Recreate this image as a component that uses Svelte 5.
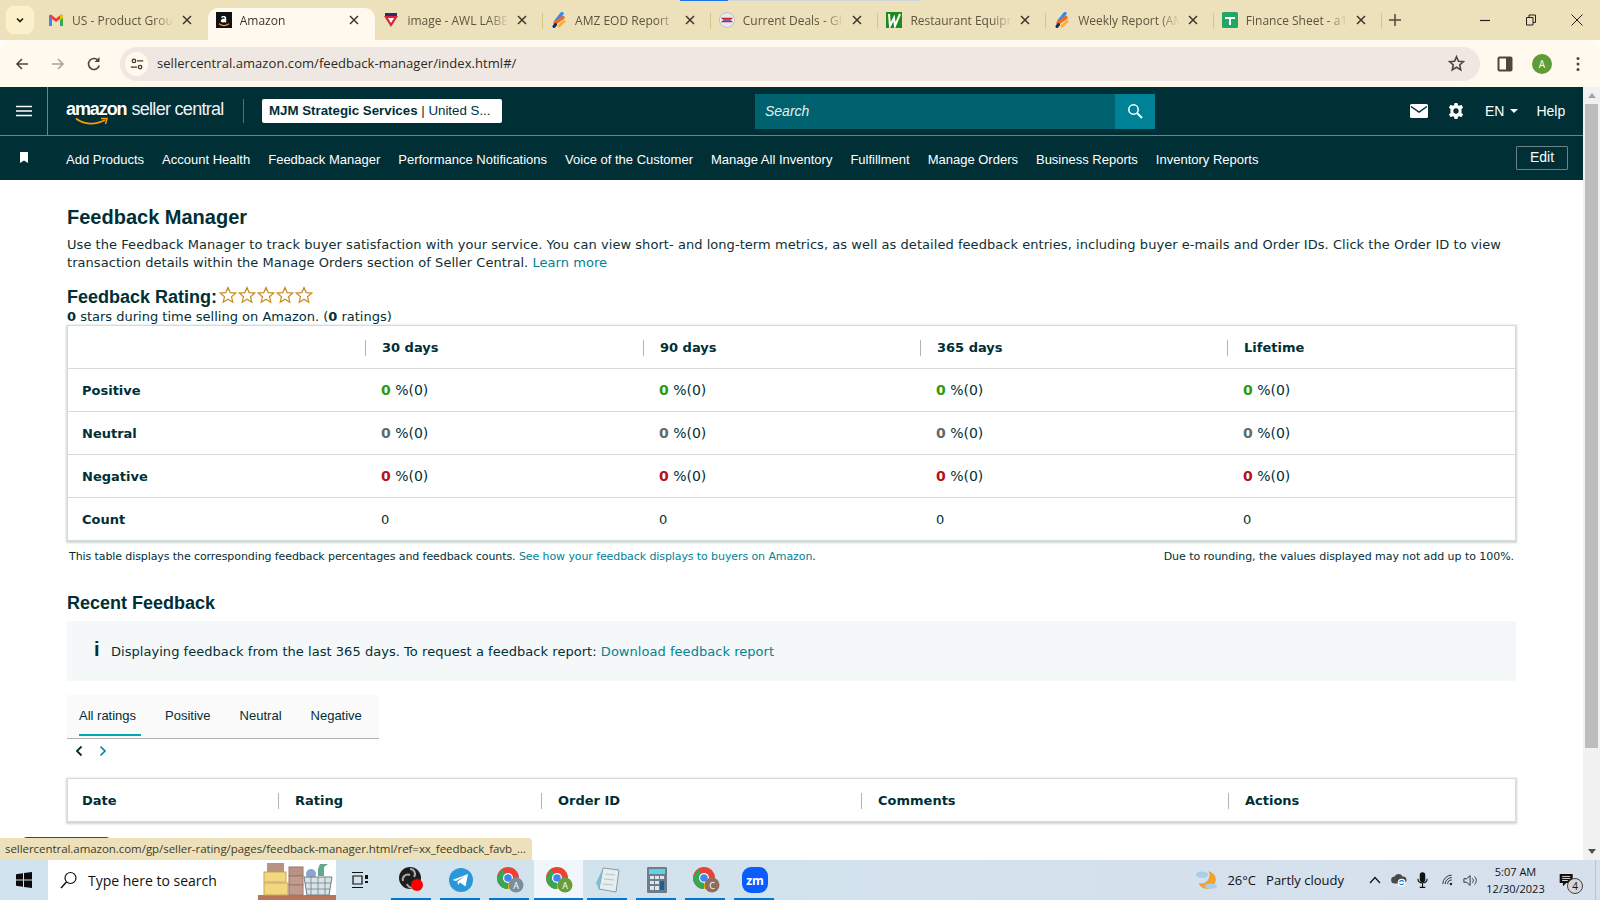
<script>
  const tabs = [
    { title: 'US - Product Group', icon: 'gmail' },
    { title: 'Amazon', icon: 'amazon', active: true },
    { title: 'image - AWL LABEL', icon: 'awl' },
    { title: 'AMZ EOD Report', icon: 'monday' },
    { title: 'Current Deals - Global', icon: 'gpd' },
    { title: 'Restaurant Equipment', icon: 'rest' },
    { title: 'Weekly Report (AMZ)', icon: 'monday' },
    { title: 'Finance Sheet - a1b2', icon: 'sheet' }
  ];

  const navLinks = [
    'Add Products', 'Account Health', 'Feedback Manager', 'Performance Notifications',
    'Voice of the Customer', 'Manage All Inventory', 'Fulfillment', 'Manage Orders',
    'Business Reports', 'Inventory Reports'
  ];

  const ratingRows = [
    { label: 'Positive', tone: 'pos' },
    { label: 'Neutral', tone: 'neu' },
    { label: 'Negative', tone: 'neg' }
  ];
  const periods = ['30 days', '90 days', '365 days', 'Lifetime'];
  const ratingTabs = ['All ratings', 'Positive', 'Neutral', 'Negative'];
  const feedbackCols = ['Date', 'Rating', 'Order ID', 'Comments', 'Actions'];
  const taskIcons = ['obs', 'telegram', 'chromeA', 'chromeActive', 'notepad', 'calc', 'chromeC', 'zoom'];
</script>

<div class="screen">
  <div class="tabstrip">
    <div class="tabs-menu">
      <svg viewBox="0 0 12 12" width="12" height="12"><path d="M3 4.500 6 7.500 9 4.500" fill="none" stroke="#26221a" stroke-width="1.700"/></svg>
    </div>
    {#each tabs as tab}
      <div class="tab" class:active={tab.active}>
        <span class="favicon">
          {#if tab.icon === 'gmail'}
            <svg viewBox="0 0 16 16"><path d="M1 14V3.500L3 2.500 8 6.500 13 2.500 15 3.500V14H12V7L8 10 4 7V14Z" fill="#ea4335"/><path d="M1 14V3.500L4 6V14Z" fill="#4285f4"/><path d="M15 14V3.500L12 6V14Z" fill="#34a853"/><path d="M12 3.500 13 2.500 15 3.500V6L12 8Z" fill="#fbbc04"/></svg>
          {:else if tab.icon === 'amazon'}
            <svg viewBox="0 0 16 16"><rect width="16" height="16" fill="#111"/><path d="M5 5.200C5.500 3.800 10.200 3.200 10.200 6V10.500H8.600V9.700C7.500 10.900 4.800 10.800 4.800 8.800 4.800 7 7 6.600 8.600 6.700 8.700 5 6.800 5 6.200 6Z" fill="#fff"/><path d="M3 11.800C6 14 10 14 13 11.800" fill="none" stroke="#f90" stroke-width="1.200"/></svg>
          {:else if tab.icon === 'awl'}
            <svg viewBox="0 0 16 16"><path d="M1 4H15L8 15Z" fill="#d8263c"/><path d="M5 6H11L8 11Z" fill="#fff"/><rect x="2" y="1" width="12" height="3" fill="#2d2a6e"/></svg>
          {:else if tab.icon === 'monday'}
            <svg viewBox="0 0 16 16"><path d="M5 9 11 1.500" stroke="#2f8cf0" stroke-width="3.500" stroke-linecap="round"/><path d="M4 11 12 5.500" stroke="#f26a21" stroke-width="3.500" stroke-linecap="round"/><path d="M8 14 13 9.500" stroke="#fbb034" stroke-width="3" stroke-linecap="round"/><path d="M3 14.500 4.500 12.500" stroke="#1c2a5a" stroke-width="3" stroke-linecap="round"/></svg>
          {:else if tab.icon === 'gpd'}
            <svg viewBox="0 0 16 16"><circle cx="8" cy="8" r="7.500" fill="#e8e8f0" stroke="#9aa" stroke-width=".6"/><rect x="1" y="6" width="14" height="4" fill="#fff"/><path d="M2.500 6.500H13.500M2.500 9.500H13.500" stroke="#d0202a" stroke-width="1.400"/><path d="M4 8H12" stroke="#2a3a8a" stroke-width="1.300"/></svg>
          {:else if tab.icon === 'rest'}
            <svg viewBox="0 0 16 16"><rect width="16" height="16" fill="#1f8a1f"/><path d="M3 2 4 14 8 6 9 14 14 2" fill="none" stroke="#fff" stroke-width="2"/></svg>
          {:else if tab.icon === 'sheet'}
            <svg viewBox="0 0 16 16"><rect width="16" height="16" rx="1.500" fill="#23a566"/><path d="M3 5H13V7H9V13H7V7H3Z" fill="#fff"/></svg>
          {/if}
        </span>
        <span class="tab-title">{tab.title}</span>
        <svg class="tab-x" viewBox="0 0 10 10" width="10" height="10"><path d="M1 1 9 9M9 1 1 9" stroke="#3b372c" stroke-width="1.500"/></svg>
      </div>
    {/each}
    <svg class="new-tab" viewBox="0 0 12 12" width="12" height="12"><path d="M6 0V12M0 6H12" stroke="#4d4836" stroke-width="1.500"/></svg>
    <div class="window-btns">
      <svg viewBox="0 0 12 12" width="12" height="12"><path d="M1 6.500H11" stroke="#222" stroke-width="1.200"/></svg>
      <svg viewBox="0 0 12 12" width="12" height="12"><path d="M1.500 3.500H8V11H1.500ZM4 3.500V1H10.500V8.500H8" fill="none" stroke="#222"/></svg>
      <svg viewBox="0 0 12 12" width="12" height="12"><path d="M.5.500 11.500 11.500M11.500.500.5 11.500" stroke="#222"/></svg>
    </div>
    <div class="load-bar"></div>
  </div>

  <div class="toolbar">
    <svg class="tool first" viewBox="0 0 16 16" width="16" height="16"><path d="M14 8H3M8 3 3 8 8 13" fill="none" stroke="#4d4836" stroke-width="1.600"/></svg>
    <svg class="tool" viewBox="0 0 16 16" width="16" height="16"><path d="M2 8H13M8 3 13 8 8 13" fill="none" stroke="#a9a595" stroke-width="1.600"/></svg>
    <svg class="tool" viewBox="0 0 16 16" width="16" height="16"><path d="M13.300 9.500A5.500 5.500 0 1 1 12 4.200" fill="none" stroke="#4d4836" stroke-width="1.600"/><path d="M13.500 1V6H8.500Z" fill="#4d4836"/></svg>
    <div class="urlbar">
      <span class="site-btn">
        <svg viewBox="0 0 16 16" width="14" height="14"><circle cx="4.500" cy="4.500" r="2" fill="none" stroke="#3c3828" stroke-width="1.400"/><path d="M8 4.500H15M1 11.500H8" stroke="#3c3828" stroke-width="1.400"/><circle cx="11.500" cy="11.500" r="2" fill="none" stroke="#3c3828" stroke-width="1.400"/></svg>
      </span>
      <span class="url">sellercentral.amazon.com/feedback-manager/index.html#/</span>
      <svg class="url-star" viewBox="0 0 18 18" width="17" height="17"><path d="M9 1.800 11.100 6.600 16.300 7.100 12.400 10.600 13.500 15.700 9 13 4.500 15.700 5.600 10.600 1.700 7.100 6.900 6.600Z" fill="none" stroke="#4d4836" stroke-width="1.700"/></svg>
    </div>
    <svg class="side-panel" viewBox="0 0 16 16" width="16" height="16"><rect x="1.500" y="1.500" width="13" height="13" rx="1" fill="#fff9ee" stroke="#4d4836" stroke-width="2"/><rect x="9" y="1" width="6" height="14" fill="#4d4836"/></svg>
    <span class="avatar">A</span>
    <svg class="kebab" viewBox="0 0 4 16" width="4" height="16"><circle cx="2" cy="2.500" r="1.500" fill="#4d4836"/><circle cx="2" cy="8" r="1.500" fill="#4d4836"/><circle cx="2" cy="13.500" r="1.500" fill="#4d4836"/></svg>
  </div>

  <div class="viewport">
    <div class="page">
      <header class="masthead">
        <div class="top-row">
          <button class="burger" aria-label="Menu">
            <svg viewBox="0 0 16 12" width="16" height="12"><path d="M0 1.500H16M0 6H16M0 10.500H16" stroke="#fff" stroke-width="1.700"/></svg>
          </button>
          <div class="logo">
            <span class="logo-amazon">amazon</span><span class="logo-seller">seller central</span>
            <svg class="smile" viewBox="0 0 34 10" width="34" height="10"><path d="M1 1.500C9 8 21 8 30 3" fill="none" stroke="#f90" stroke-width="1.800"/><path d="M26 1.500 32 1.500 30.500 7" fill="none" stroke="#f90" stroke-width="1.500"/></svg>
          </div>
          <span class="logo-div"></span>
          <div class="account"><b>MJM Strategic Services</b> | United S...</div>
          <div class="search">
            <span class="search-input">Search</span>
            <span class="search-btn">
              <svg viewBox="0 0 16 16" width="16" height="16"><circle cx="6.500" cy="6.500" r="4.700" fill="none" stroke="#fff" stroke-width="1.500"/><path d="M10 10 15 15" stroke="#fff" stroke-width="2"/></svg>
            </span>
          </div>
          <div class="top-right">
            <svg viewBox="0 0 18 14" width="18" height="14"><rect width="18" height="14" rx="1.500" fill="#fff"/><path d="M1 2.500 9 8 17 2.500" fill="none" stroke="#002f36" stroke-width="1.500"/></svg>
            <svg class="gear" viewBox="0 0 18 18" width="16" height="16"><path d="M7.300 0H10.700L11.200 2.500 12.700 3.200 15 2 17 5 15.200 6.800V11.200L17 13 15 16 12.700 14.800 11.200 15.500 10.700 18H7.300L6.800 15.500 5.300 14.800 3 16 1 13 2.800 11.200V6.800L1 5 3 2 5.300 3.200 6.800 2.500Z" fill="#fff"/><circle cx="9" cy="9" r="3" fill="#002f36"/></svg>
            <span class="lang">EN <i class="caret"></i></span>
            <span class="help">Help</span>
          </div>
        </div>
        <nav class="nav-row">
          <svg class="bookmark" viewBox="0 0 8 11" width="8" height="11"><path d="M0 0H8V11L4 8.500 0 11Z" fill="#fff"/></svg>
          {#each navLinks as link}
            <span class="nav-link">{link}</span>
          {/each}
          <button class="edit">Edit</button>
        </nav>
      </header>

      <main class="content">
        <h1>Feedback Manager</h1>
        <p class="intro">Use the Feedback Manager to track buyer satisfaction with your service. You can view short- and long-term metrics, as well as detailed feedback entries, including buyer e-mails and Order IDs. Click the Order ID to view transaction details within the Manage Orders section of Seller Central. <span class="link">Learn more</span></p>

        <div class="rating-head">
          <h2>Feedback Rating:</h2>
          <div class="stars">
            {#each [1, 2, 3, 4, 5] as s (s)}
              <svg viewBox="0 0 18 18" width="18" height="18"><path d="M9 1.500 11.200 6.600 16.700 7.100 12.500 10.700 13.800 16.200 9 13.300 4.200 16.200 5.500 10.700 1.300 7.100 6.800 6.600Z" fill="#fff" stroke="#c98a1e" stroke-width="1.200"/></svg>
            {/each}
          </div>
        </div>
        <p class="rating-sub"><b>0</b> stars during time selling on Amazon. (<b>0</b> ratings)</p>

        <div class="card stats">
          <div class="row head">
            <span class="cell"></span>
            {#each periods as p}
              <span class="cell th sep">{p}</span>
            {/each}
          </div>
          {#each ratingRows as r}
            <div class="row">
              <span class="cell label">{r.label}</span>
              {#each periods as p}
                <span class="cell val"><b class={r.tone}>0</b> %(0)</span>
              {/each}
            </div>
          {/each}
          <div class="row">
            <span class="cell label">Count</span>
            {#each periods as p}
              <span class="cell">0</span>
            {/each}
          </div>
        </div>

        <div class="footnote">
          <span class="note-left">This table displays the corresponding feedback percentages and feedback counts. <span class="link">See how your feedback displays to buyers on Amazon</span>.</span>
          <span class="note-right">Due to rounding, the values displayed may not add up to 100%.</span>
        </div>

        <h3>Recent Feedback</h3>
        <div class="info">
          <span class="info-i">i</span>
          <span>Displaying feedback from the last 365 days. To request a feedback report: <span class="link">Download feedback report</span></span>
        </div>

        <div class="rating-tabs">
          {#each ratingTabs as t, i}
            <span class="rtab" class:on={i === 0}>{t}</span>
          {/each}
        </div>
        <div class="pager">
          <svg viewBox="0 0 8 12" width="8" height="12"><path d="M6.500 1.500 2 6 6.500 10.500" fill="none" stroke="#002f36" stroke-width="1.800"/></svg>
          <svg viewBox="0 0 8 12" width="8" height="12"><path d="M1.500 1.500 6 6 1.500 10.500" fill="none" stroke="#008296" stroke-width="1.600"/></svg>
        </div>

        <div class="card feedback">
          {#each feedbackCols as c, i}
            <span class="cell th" class:sep={i > 0}>{c}</span>
          {/each}
        </div>
        <div class="peek"></div>
      </main>
    </div>

    <div class="scrollbar">
      <svg viewBox="0 0 8 5" width="8" height="5"><path d="M4 0 8 5H0Z" fill="#a3a3a3"/></svg>
      <div class="thumb"></div>
      <svg class="down" viewBox="0 0 8 5" width="8" height="5"><path d="M0 0H8L4 5Z" fill="#505050"/></svg>
    </div>

    <div class="status">sellercentral.amazon.com/gp/seller-rating/pages/feedback-manager.html/ref=xx_feedback_favb_...</div>
  </div>

  <footer class="taskbar">
    <svg class="win" viewBox="0 0 16 16" width="16" height="16"><path d="M0 2.300 7 1.300V7.500H0ZM8 1.100 16 0V7.500H8ZM0 8.500H7V14.700L0 13.700ZM8 8.500H16V16L8 14.900Z" fill="#0b0b0b"/></svg>
    <div class="task-search">
      <svg viewBox="0 0 18 18" width="18" height="18"><circle cx="10.500" cy="7" r="5.500" fill="none" stroke="#111" stroke-width="1.200"/><path d="M6.500 11 1 17" stroke="#111" stroke-width="1.500"/></svg>
      <span>Type here to search</span>
      <svg class="boxes" viewBox="0 0 78 40" width="78" height="40">
        <rect y="35" width="78" height="5" fill="#b5765a"/>
        <rect x="6" y="23" width="24" height="12" fill="#f2d77e" stroke="#c9a64e"/>
        <rect x="6" y="12" width="22" height="10" fill="#f2d77e" stroke="#c9a64e"/>
        <rect x="9" y="3" width="17" height="9" fill="#b89283"/>
        <rect x="31" y="7" width="14" height="9" fill="#b89283" stroke="#9c7768"/>
        <rect x="31" y="16" width="14" height="9" fill="#c19c8c" stroke="#9c7768"/>
        <rect x="31" y="25" width="14" height="10" fill="#c19c8c" stroke="#9c7768"/>
        <circle cx="53" cy="14" r="5" fill="#8da6d0"/>
        <path d="M62 4H70L66 7V16H60V9Z" fill="#63a88a"/>
        <path d="M46 17H74L71 35H49Z" fill="#d8e4e4" stroke="#6f7f8a"/>
        <path d="M53 17V35M60 17V35M67 17V35M47 23H73M48 29H72" stroke="#6f7f8a" stroke-width=".8"/>
      </svg>
    </div>
    <svg class="taskview" viewBox="0 0 18 16" width="18" height="16"><path d="M1 .5H12M1 15.500H12M2 4H11V12H2Z" fill="none" stroke="#111" stroke-width="1.200"/><rect x="14" y="3" width="3" height="4" fill="#111"/><rect x="14" y="9" width="3" height="2" fill="#111"/></svg>
    <div class="task-icons">
      {#each taskIcons as t}
        <div class="task-item" class:current={t === 'chromeActive'}>
          {#if t === 'obs'}
            <svg viewBox="0 0 28 28" width="28" height="28"><circle cx="12" cy="12" r="11" fill="#1e1e1e"/><path d="M12 3A5 5 0 0 1 16 11M5 15A5 5 0 0 1 12 9M19 15A5 5 0 0 1 9 18" fill="none" stroke="#aaa" stroke-width="2"/><circle cx="19" cy="19" r="6" fill="#f00"/></svg>
          {:else if t === 'telegram'}
            <svg viewBox="0 0 28 28" width="28" height="28"><circle cx="14" cy="14" r="12" fill="#2a98d8"/><path d="M5.500 14 21 8 18.500 20.500 13 16.500 11 19 10.500 15.500 18 10 9 15Z" fill="#fff"/></svg>
          {:else if t === 'chromeA' || t === 'chromeActive' || t === 'chromeC'}
            <svg viewBox="0 0 30 28" width="30" height="28">
              <circle cx="13" cy="12" r="11" fill="#ea4335"/>
              <path d="M13 12 3.500 17.500A11 11 0 0 0 13 23Z" fill="#34a853"/>
              <path d="M2 12A11 11 0 0 0 3.500 17.500L13 12 7 3Z" fill="#34a853"/>
              <path d="M13 12H24A11 11 0 0 1 13 23Z" fill="#fbbc04"/>
              <circle cx="13" cy="12" r="5" fill="#fff"/><circle cx="13" cy="12" r="3.800" fill="#4285f4"/>
              <circle cx="21" cy="19" r="7.500" fill={t === 'chromeA' ? '#78909c' : t === 'chromeC' ? '#8d6e63' : '#689f38'}/>
              <text x="21" y="22.500" text-anchor="middle" class="badge-letter">{t === 'chromeC' ? 'C' : 'A'}</text>
            </svg>
          {:else if t === 'notepad'}
            <svg viewBox="0 0 28 28" width="28" height="28"><path d="M9 2 25 4 22 26 5 23Z" fill="#e8eef0" stroke="#8a9aa0"/><path d="M9 2 5 23 2 17Z" fill="#79c0d0"/><path d="M11 8 21 9M10 13 20 14M9 18 19 19" stroke="#b4c4cc"/></svg>
          {:else if t === 'calc'}
            <svg viewBox="0 0 28 28" width="28" height="28"><rect x="4" y="1" width="20" height="26" rx="1" fill="#6f7d88"/><rect x="6" y="3" width="16" height="5" fill="#62d0e8"/><path d="M7 10H11V13H7ZM12 10H16V13H12ZM17 10H21V13H17ZM7 15H11V18H7ZM12 15H16V18H12ZM7 20H11V24H7ZM12 20H16V24H12Z" fill="#dfe6ea"/><rect x="17" y="15" width="4" height="9" fill="#1d5f9e"/></svg>
          {:else if t === 'zoom'}
            <svg viewBox="0 0 28 28" width="28" height="28"><rect x="1" y="1" width="26" height="26" rx="9" fill="#0b5cff"/><text x="14" y="18.500" text-anchor="middle" class="zm">zm</text></svg>
          {/if}
        </div>
      {/each}
    </div>
    <div class="tray">
      <svg class="weather" viewBox="0 0 26 24" width="23" height="22"><path d="M15 2A10 10 0 1 1 4 15 9 9 0 0 0 15 2Z" fill="#f4a02c"/><ellipse cx="8" cy="6" rx="7" ry="3.500" fill="#a9cdec"/><ellipse cx="18" cy="19" rx="7" ry="3" fill="#a9cdec"/></svg>
      <span class="temp">26°C</span>
      <span class="sky">Partly cloudy</span>
      <svg class="tray-chev" viewBox="0 0 12 8" width="12" height="8"><path d="M1 7 6 1.500 11 7" fill="none" stroke="#111" stroke-width="1.200"/></svg>
      <svg class="tray-cloud" viewBox="0 0 18 16" width="16" height="14"><path d="M4 12A4 4 0 0 1 4 4 5 5 0 0 1 13 4 4 4 0 0 1 14 12Z" fill="#4a4a4a"/><circle cx="12" cy="11" r="4.500" fill="#fff"/><path d="M9.500 10A3 3 0 0 1 14.500 10M14.500 12A3 3 0 0 1 9.500 12" fill="none" stroke="#1a73e8" stroke-width="1.300"/></svg>
      <svg class="tray-mic" viewBox="0 0 12 18" width="11" height="17"><rect x="3" y="0" width="6" height="11" rx="3" fill="#111"/><path d="M1 7C1 13 11 13 11 7M6 12V16M3 16.500H9" fill="none" stroke="#111" stroke-width="1.200"/></svg>
      <svg class="tray-wifi" viewBox="0 0 16 14" width="13" height="12"><path d="M1 12A11 11 0 0 1 12 1M4 12A8 8 0 0 1 12 4M7 12A5 5 0 0 1 12 7" fill="none" stroke="#222" stroke-width="1.100"/><circle cx="11" cy="12" r="1.500" fill="#222"/></svg>
      <svg class="tray-vol" viewBox="0 0 18 14" width="16" height="13"><path d="M1 5H4L8 1.500V12.500L4 9H1Z" fill="none" stroke="#222"/><path d="M10.500 4.500C12 6 12 8 10.500 9.500M13 2.500C15.500 5 15.500 9 13 11.500" fill="none" stroke="#222"/></svg>
      <div class="clock"><span>5:07 AM</span><span>12/30/2023</span></div>
      <div class="notif">
        <svg viewBox="0 0 18 16" width="16" height="13"><path d="M0 0H16V11H8L4 15V11H0Z" fill="#111"/><path d="M3 3H13M3 5.500H13M3 8H10" stroke="#fff"/></svg>
        <span class="notif-count">4</span>
      </div>
      <span class="show-desktop"></span>
    </div>
  </footer>
</div>

<style>
  :global(body) {
    margin: 0;
    overflow: hidden;
  }

  .screen {
    width: 1600px;
    height: 900px;
    display: flex;
    flex-direction: column;
    overflow: hidden;
    font-family: "DejaVu Sans", sans-serif;
    background: #fff;
  }

  /* browser chrome */
  .tabstrip {
    position: relative;
    height: 40px;
    flex: none;
    display: flex;
    align-items: flex-start;
    padding: 0 0 0 6px;
    background: #ece1bb;
    font-family: "Open Sans", sans-serif;
  }

  .tabs-menu {
    width: 28px;
    height: 28px;
    margin-top: 6px;
    margin-right: 6px;
    display: flex;
    align-items: center;
    justify-content: center;
    background: #fbf1cc;
    border-radius: 8px;
  }

  .tab {
    position: relative;
    width: 167.7px;
    height: 32px;
    margin-top: 8px;
    flex: none;
    display: flex;
    align-items: center;
    padding: 0 16px 8px 8px;
    box-sizing: border-box;
    border-radius: 10px 10px 0 0;
    color: #5c5640;
    font-size: 12px;
  }

  .tab::after {
    content: "";
    position: absolute;
    right: 0;
    top: 5px;
    width: 1px;
    height: 16px;
    background: #d9c67e;
  }

  .tab:nth-child(2)::after,
  .tab:nth-child(3)::after {
    display: none;
  }

  .tab.active {
    background: #fff9ee;
    color: #3b372c;
  }

  .favicon {
    width: 16px;
    height: 16px;
    flex: none;
    margin-right: 8px;
  }

  .favicon svg {
    display: block;
    width: 16px;
    height: 16px;
  }

  .tab-title {
    flex: 1;
    min-width: 0;
    white-space: nowrap;
    overflow: hidden;
    -webkit-mask-image: linear-gradient(to right, #000 80%, transparent);
    mask-image: linear-gradient(to right, #000 80%, transparent);
  }

  .tab-x {
    flex: none;
    margin-left: 8px;
  }

  .new-tab {
    margin: 14px 0 0 7px;
  }

  .window-btns {
    position: absolute;
    right: 17px;
    top: 14px;
    display: flex;
    gap: 34px;
  }

  .load-bar {
    position: absolute;
    left: 680px;
    top: 0;
    width: 241px;
    height: 1px;
    background: linear-gradient(to right, #1a73e8 48px, #cfd6d8 48px);
  }

  .toolbar {
    height: 47px;
    flex: none;
    display: flex;
    align-items: center;
    background: #fff9ee;
    border-radius: 10px 10px 0 0;
  }

  .tool {
    margin-left: 20px;
  }

  .tool.first {
    margin-left: 14px;
  }

  .urlbar {
    width: 1360px;
    height: 34px;
    margin-left: 18px;
    display: flex;
    align-items: center;
    background: #efe8e2;
    border-radius: 17px;
    color: #2c2a23;
    font-family: "Open Sans", sans-serif;
    font-size: 13px;
  }

  .site-btn {
    width: 23px;
    height: 24px;
    margin-left: 5px;
    display: flex;
    align-items: center;
    justify-content: center;
    background: #fff9ee;
    border-radius: 50%;
  }

  .url {
    margin-left: 9px;
    padding-bottom: 2px;
    flex: 1;
    letter-spacing: 0.05px;
  }

  .url-star {
    margin-right: 15px;
  }

  .side-panel {
    margin-left: 17px;
  }

  .avatar {
    width: 20px;
    height: 20px;
    margin-left: 19px;
    display: flex;
    align-items: center;
    justify-content: center;
    border-radius: 50%;
    background: #5f9b37;
    color: #fff;
    font-size: 10px;
    font-family: "Open Sans", sans-serif;
  }

  .kebab {
    margin-left: 24px;
  }

  /* page area */
  .viewport {
    position: relative;
    flex: 1;
    min-height: 0;
    display: flex;
  }

  .page {
    flex: 1;
    min-width: 0;
    overflow: hidden;
  }

  .masthead {
    background: #002f36;
    color: #fff;
    font-family: "Liberation Sans", sans-serif;
  }

  .top-row {
    position: relative;
    height: 48px;
    display: flex;
    align-items: center;
    border-bottom: 1px solid #6d8286;
  }

  .burger {
    width: 48px;
    height: 48px;
    flex: none;
    padding: 0;
    display: flex;
    align-items: center;
    justify-content: center;
    background: none;
    border: 0;
    border-right: 1px solid #6d8286;
  }

  .logo {
    position: relative;
    width: 177px;
    flex: none;
    margin-left: 18px;
    display: flex;
    align-items: baseline;
    white-space: nowrap;
    line-height: 22px;
    padding-bottom: 4px;
  }

  .logo-amazon {
    font-size: 18px;
    font-weight: 700;
    letter-spacing: -1.1px;
  }

  .logo-seller {
    margin-left: 5px;
    font-size: 18px;
    letter-spacing: -0.7px;
    color: #f2f2f2;
  }

  .smile {
    position: absolute;
    left: 9px;
    top: 19px;
  }

  .logo-div {
    width: 1px;
    height: 24px;
    flex: none;
    background: #55706f;
  }

  .account {
    width: 240px;
    height: 24px;
    flex: none;
    margin-left: 18px;
    padding-left: 7px;
    box-sizing: border-box;
    background: #fff;
    border-radius: 2px;
    color: #002f36;
    font-size: 13.3px;
    line-height: 24px;
    white-space: nowrap;
  }

  .search {
    width: 400px;
    height: 35px;
    flex: none;
    margin-left: 253px;
    display: flex;
    background: #00616f;
  }

  .search-input {
    flex: 1;
    padding-left: 10px;
    font-size: 14px;
    font-style: italic;
    line-height: 35px;
    color: #e4eef0;
  }

  .search-btn {
    width: 40px;
    display: flex;
    align-items: center;
    justify-content: center;
    background: #008296;
  }

  .top-right {
    display: flex;
    align-items: center;
    margin-left: 255px;
    font-size: 14px;
  }

  .gear {
    margin-left: 20px;
  }

  .lang {
    margin-left: 21px;
    display: flex;
    align-items: center;
    gap: 6px;
  }

  .caret {
    width: 0;
    height: 0;
    border-left: 4px solid transparent;
    border-right: 4px solid transparent;
    border-top: 4px solid #fff;
  }

  .help {
    margin-left: 18px;
  }

  .nav-row {
    position: relative;
    height: 44px;
    display: flex;
    align-items: center;
    padding: 2px 0 0 20px;
    box-sizing: border-box;
    gap: 18px;
    font-size: 13px;
  }

  .bookmark {
    margin-right: 20px;
    margin-top: -4px;
  }

  .nav-link {
    white-space: nowrap;
  }

  .edit {
    position: absolute;
    right: 15px;
    top: 10px;
    width: 52px;
    height: 24px;
    padding: 0 0 2px;
    background: transparent;
    border: 1px solid #6d8286;
    border-radius: 1px;
    color: #fff;
    font: 14px "Liberation Sans", sans-serif;
  }

  .content {
    padding: 0 67px;
    color: #002f36;
    font-size: 13px;
  }

  h1 {
    margin: 0;
    padding-top: 23px;
    font: 700 20px/28px "Liberation Sans", sans-serif;
  }

  .intro {
    margin: 5px 0 0;
    line-height: 18px;
    letter-spacing: 0.05px;
    color: #0f2f33;
  }

  .link {
    color: #008296;
  }

  .rating-head {
    display: flex;
    align-items: center;
    margin-top: 13px;
    height: 24px;
  }

  h2 {
    margin: 0;
    font: 700 18px/24px "Liberation Sans", sans-serif;
  }

  .stars {
    display: flex;
    gap: 1px;
    margin-left: 2px;
    margin-top: -4px;
  }

  .rating-sub {
    margin: 0;
    line-height: 16px;
    height: 16px;
  }

  .card {
    background: #fff;
    border: 1px solid #d5dbdb;
    box-shadow: 0 1px 2px 1px rgba(0, 47, 54, 0.2);
  }

  .stats {
    height: 216px;
    box-sizing: border-box;
  }

  .row {
    height: 42px;
    display: grid;
    grid-template-columns: 297px 278px 277px 307px 1fr;
    align-items: center;
    border-top: 1px solid #d5dbdb;
  }

  .row.head {
    height: 42px;
    border-top: 0;
  }

  .cell {
    padding-left: 14px;
    white-space: nowrap;
  }

  .th {
    position: relative;
    padding-left: 17px;
    font-weight: 700;
  }

  .sep::before {
    content: "";
    position: absolute;
    left: 0;
    top: 0;
    width: 1px;
    height: 16px;
    background: #a9b7b8;
  }

  .row:not(.head) .cell:not(:first-child) {
    padding-left: 16px;
  }

  .val {
    font-size: 14px;
  }

  .label {
    font-weight: 700;
  }

  .pos { color: #2e9b10; }
  .neu { color: #5f6b6d; }
  .neg { color: #b1151c; }

  .footnote {
    display: flex;
    justify-content: space-between;
    padding: 9px 2px 0;
    font-size: 11px;
    line-height: 14px;
  }

  .note-left {
    letter-spacing: -0.09px;
  }

  .note-right {
    letter-spacing: -0.05px;
  }

  h3 {
    margin: 0;
    padding-top: 27px;
    font: 700 18px/24px "Liberation Sans", sans-serif;
  }

  .info {
    height: 60px;
    margin-top: 6px;
    display: flex;
    align-items: center;
    padding-left: 27px;
    background: #f5f8f9;
    letter-spacing: 0.04px;
  }

  .info-i {
    width: 17px;
    flex: none;
    font: 700 20px "Liberation Sans", sans-serif;
    color: #002f36;
    margin-top: -3px;
  }

  .rating-tabs {
    width: 312px;
    height: 44px;
    margin-top: 14px;
    display: flex;
    padding-left: 12px;
    gap: 29px;
    box-sizing: border-box;
    background: #fafafa;
    border-bottom: 1px solid #b3b3b3;
    font: 13px/41px "Liberation Sans", sans-serif;
  }

  .rtab {
    height: 41px;
    box-sizing: border-box;
  }

  .rtab.on {
    padding-right: 5px;
    margin-right: -5px;
    border-bottom: 2px solid #00a8b3;
  }

  .pager {
    display: flex;
    gap: 16px;
    height: 39px;
    padding: 6px 0 0 8px;
    box-sizing: border-box;
  }

  .feedback {
    height: 44px;
    box-sizing: border-box;
    display: grid;
    grid-template-columns: 210px 263px 320px 367px 1fr;
    align-items: center;
  }

  .feedback .cell:first-child {
    padding-left: 14px;
  }

  .peek {
    width: 89px;
    height: 30px;
    margin: 15px 0 0 -45px;
    background: #00616f;
    border-radius: 5px 5px 0 0;
  }

  .scrollbar {
    width: 17px;
    flex: none;
    display: flex;
    flex-direction: column;
    align-items: center;
    background: #f1f1f1;
    padding-top: 6px;
    box-sizing: border-box;
  }

  .thumb {
    width: 13px;
    height: 644px;
    margin-top: 6px;
    background: #bdbdbd;
  }

  .down {
    margin-top: auto;
    margin-bottom: 6px;
  }

  .status {
    position: absolute;
    left: 0;
    bottom: 0;
    width: 532px;
    height: 22px;
    padding-left: 5px;
    box-sizing: border-box;
    background: #ece1bb;
    border-radius: 0 4px 0 0;
    color: #3f3a27;
    font: 11.5px/22px "Open Sans", sans-serif;
    letter-spacing: -0.05px;
    white-space: nowrap;
    overflow: hidden;
  }

  /* windows taskbar */
  .taskbar {
    height: 40px;
    flex: none;
    display: flex;
    align-items: center;
    background: linear-gradient(to right, #cfe4ee, #d6e0ec);
    font-family: "Open Sans", sans-serif;
    color: #111;
  }

  .win {
    flex: none;
    margin-left: 16px;
  }

  .task-search {
    width: 288px;
    height: 40px;
    flex: none;
    margin-left: 16px;
    display: flex;
    align-items: center;
    box-sizing: border-box;
    padding-left: 12px;
    background: #fff;
    font-size: 14px;
    position: relative;
  }

  .task-search span {
    margin-left: 10px;
  }

  .boxes {
    position: absolute;
    right: 0;
    top: 0;
  }

  .taskview {
    flex: none;
    margin-left: 15px;
  }

  .task-icons {
    display: flex;
    flex: none;
    margin-left: 18px;
  }

  .task-item {
    position: relative;
    width: 49px;
    height: 40px;
    display: flex;
    align-items: center;
    justify-content: center;
    box-sizing: border-box;
  }

  .task-item::after {
    content: "";
    position: absolute;
    left: 4px;
    right: 5px;
    bottom: 0;
    height: 2px;
    background: #0078d4;
  }

  .task-item.current {
    background: #f0f6fa;
  }

  .task-item.current::after {
    left: 0;
    right: 0;
  }

  .badge-letter {
    font: 9px "Open Sans", sans-serif;
    fill: #fff;
  }

  .zm {
    font: 700 12px "Open Sans", sans-serif;
    fill: #fff;
  }

  .tray {
    flex: 1;
    display: flex;
    align-items: center;
    justify-content: flex-end;
  }

  .temp,
  .sky {
    font-size: 13px;
    white-space: nowrap;
  }

  .temp {
    margin-left: 9px;
  }

  .sky {
    margin-left: 10px;
  }

  .tray-chev {
    margin-left: 25px;
  }

  .tray-cloud {
    margin-left: 10px;
  }

  .tray-mic {
    margin-left: 10px;
  }

  .tray-wifi {
    margin-left: 14px;
  }

  .tray-vol {
    margin-left: 8px;
  }

  .clock {
    margin-left: 8px;
    width: 57px;
    display: flex;
    flex-direction: column;
    align-items: center;
    font-size: 11px;
    line-height: 17px;
    white-space: nowrap;
  }

  .notif {
    position: relative;
    width: 24px;
    height: 24px;
    margin-left: 15px;
    margin-top: 4px;
  }

  .notif-count {
    position: absolute;
    left: 8px;
    top: 8px;
    width: 14px;
    height: 14px;
    border: 1px solid #444;
    border-radius: 50%;
    background: #d6d6d6;
    font-size: 10px;
    line-height: 14px;
    text-align: center;
  }

  .show-desktop {
    width: 1px;
    height: 40px;
    margin: 0 4px 0 12px;
    background: #b9c4cc;
  }
</style>
